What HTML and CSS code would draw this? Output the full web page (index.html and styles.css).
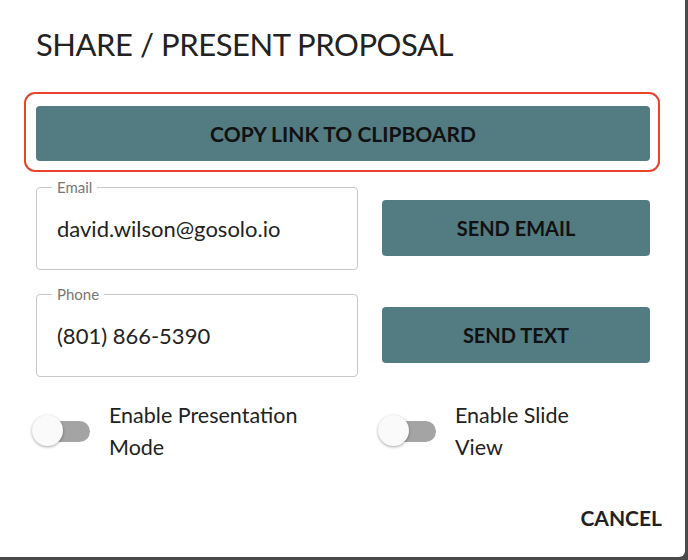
FILE: index.html
```html
<!DOCTYPE html>
<html lang="en">
<head>
    <meta charset="UTF-8">
    <meta name="viewport" content="width=device-width, initial-scale=1.0">
    <title>Share / Present Proposal</title>
    <link rel="stylesheet" href="styles.css">
</head>
<body>
    <div class="dialog">
        <h2 class="dialog-title">SHARE / PRESENT PROPOSAL</h2>

        <!-- Copiar enlace -->
        <div class="highlight">
            <button class="btn btn-wide" type="button">COPY LINK TO CLIPBOARD</button>
        </div>

        <!-- Email / Telefono -->
        <div class="send-row">
            <fieldset class="field">
                <legend>Email</legend>
                <input type="text" value="david.wilson@gosolo.io">
            </fieldset>
            <button class="btn" type="button">SEND EMAIL</button>
        </div>

        <div class="send-row">
            <fieldset class="field">
                <legend>Phone</legend>
                <input type="text" value="(801) 866-5390">
            </fieldset>
            <button class="btn" type="button">SEND TEXT</button>
        </div>

        <!-- Switches -->
        <div class="toggles">
            <label class="toggle">
                <span class="switch"><span class="track"></span><span class="thumb"></span></span>
                <span class="toggle-label">Enable Presentation Mode</span>
            </label>
            <label class="toggle">
                <span class="switch"><span class="track"></span><span class="thumb"></span></span>
                <span class="toggle-label narrow">Enable Slide View</span>
            </label>
        </div>

        <div class="actions">
            <button class="btn-text" type="button">CANCEL</button>
        </div>
    </div>
</body>
</html>
```

FILE: styles.css
```css
body {
    margin: 0;
    padding: 0;
    background-color: #4a4a4a;
    font-family: 'Lato', sans-serif;
    color: #222;
}

.dialog {
    width: 685px;
    height: 557px;
    box-sizing: border-box;
    background: #ffffff;
    border-bottom-right-radius: 6px;
    padding: 0 35px 0 36px;
}

.dialog-title {
    margin: 0;
    padding-top: 26px;
    font-size: 31px;
    font-weight: 400;
    line-height: 36px;
    color: #222;
    letter-spacing: -0.45px;
}

/* Recuadro rojo */
.highlight {
    margin: 30px -10px 0 -12px;
    padding: 12px 8px 9px 10px;
    border: 2px solid #e8442b;
    border-radius: 11px;
}

.btn {
    display: block;
    width: 100%;
    height: 56px;
    background-color: #527b82;
    color: #111;
    border: none;
    border-radius: 4px;
    font-family: 'Lato', sans-serif;
    font-size: 20px;
    font-weight: 700;
    cursor: pointer;
}

.btn-wide {
    height: 55px;
    font-size: 21px;
}

/* Campos */
.send-row {
    display: grid;
    grid-template-columns: 322px 1fr;
    column-gap: 24px;
    align-items: center;
    margin-top: 7px;
}

.send-row + .send-row {
    margin-top: 16px;
}

.send-row .btn {
    margin-top: 6px;
}

.field {
    margin: 0;
    padding: 0 20px 0 20px;
    height: 91px;
    box-sizing: border-box;
    border: 1px solid #c8c8c8;
    border-radius: 4px;
}

.field legend {
    margin-left: -5px;
    padding: 0 5px;
    font-size: 15px;
    line-height: 16px;
    color: #777;
}

.field input {
    display: block;
    width: 100%;
    margin-top: 20px;
    border: none;
    padding: 0;
    outline: none;
    font-family: 'Lato', sans-serif;
    font-size: 22px;
    color: #222;
    background: transparent;
}

/* Switches */
.toggles {
    display: grid;
    grid-template-columns: 346px 1fr;
    margin: 22px 0 0 -4px;
}

.toggle {
    display: flex;
    align-items: center;
    gap: 19px;
}

.switch {
    position: relative;
    flex: none;
    width: 58px;
    height: 32px;
}

.track {
    position: absolute;
    left: 7px;
    top: 6px;
    width: 51px;
    height: 21px;
    border-radius: 11px;
    background-color: #a4a4a4;
}

.thumb {
    position: absolute;
    left: 0;
    top: 0;
    width: 31px;
    height: 31px;
    border-radius: 50%;
    background-color: #fafafa;
    box-shadow: 0 1px 3px rgba(0, 0, 0, 0.35);
}

.toggle-label {
    max-width: 230px;
    font-size: 21.5px;
    line-height: 32px;
    color: #222;
}

.toggle-label.narrow {
    max-width: 150px;
}

.actions {
    display: flex;
    justify-content: flex-end;
    margin: 42px -12px 0 0;
}

.btn-text {
    background: none;
    border: none;
    padding: 0;
    font-family: 'Lato', sans-serif;
    font-size: 21px;
    font-weight: 700;
    color: #222;
    cursor: pointer;
}
```
